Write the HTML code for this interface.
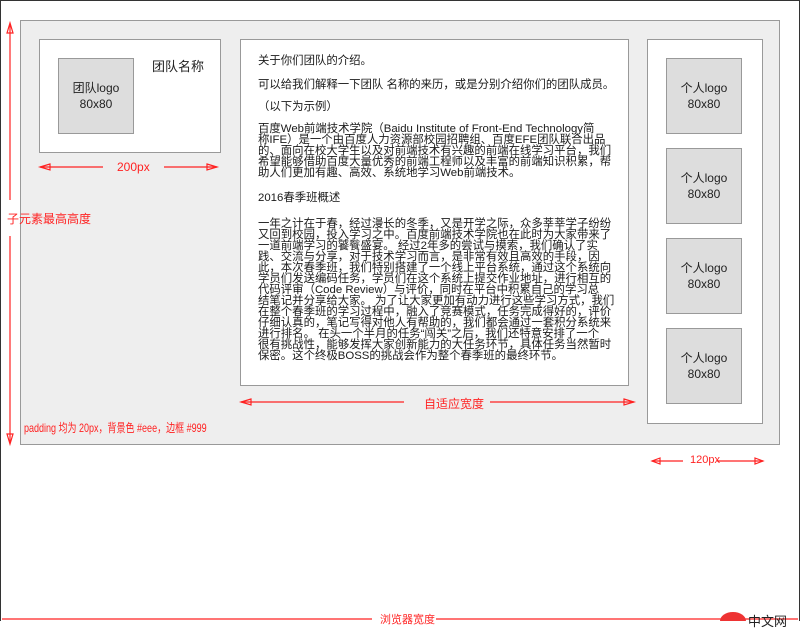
<!DOCTYPE html>
<html><head><meta charset="utf-8"><style>
*{margin:0;padding:0;box-sizing:border-box}
body{width:800px;height:621px;position:relative;background:#fff;overflow:hidden;font-family:"Liberation Sans","Noto Sans CJK SC",sans-serif;color:#222}
.frame{position:absolute;left:0;top:0;width:800px;height:621px;border:1px solid #333;border-bottom:none}
.abs{position:absolute}
.outer{left:20px;top:20px;width:760px;height:425px;background:#eee;border:1px solid #999}
.box{background:#fff;border:1px solid #999}
.logo{background:#ddd;border:1px solid #999;font-size:12px;line-height:16px;text-align:center;display:flex;align-items:center;justify-content:center;color:#222}
.t{font-size:11.4px;line-height:11px;white-space:nowrap;color:#1a1a1a}
.r{color:#f22;font-size:11px;white-space:nowrap}
</style></head><body>
<div class="frame"></div>
<div class="abs outer"></div>
<div class="abs box" style="left:39px;top:39px;width:182px;height:114px"></div>
<div class="abs logo" style="left:58px;top:58px;width:76px;height:76px">团队logo<br>80x80</div>
<div class="abs" style="left:152px;top:56px;font-size:13px;color:#222">团队名称</div>
<div class="abs box" style="left:240px;top:39px;width:389px;height:347px"></div>
<div class="abs t" style="left:258px;top:56px">关于你们团队的介绍。</div>
<div class="abs t" style="left:258px;top:80px">可以给我们解释一下团队 名称的来历，或是分别介绍你们的团队成员。</div>
<div class="abs t" style="left:258px;top:102px">（以下为示例）</div>
<div class="abs t" style="left:258px;top:124px">百度Web前端技术学院（Baidu Institute of Front-End Technology简<br>称IFE）是一个由百度人力资源部校园招聘组、百度EFE团队联合出品<br>的、面向在校大学生以及对前端技术有兴趣的前端在线学习平台，我们<br>希望能够借助百度大量优秀的前端工程师以及丰富的前端知识积累，帮<br>助人们更加有趣、高效、系统地学习Web前端技术。</div>
<div class="abs t" style="left:258px;top:193px">2016春季班概述</div>
<div class="abs t" style="left:258px;top:219px">一年之计在于春，经过漫长的冬季，又是开学之际，众多莘莘学子纷纷<br>又回到校园，投入学习之中。百度前端技术学院也在此时为大家带来了<br>一道前端学习的饕餮盛宴。 经过2年多的尝试与摸索，我们确认了实<br>践、交流与分享，对于技术学习而言，是非常有效且高效的手段，因<br>此，本次春季班，我们特别搭建了一个线上平台系统，通过这个系统向<br>学员们发送编码任务，学员们在这个系统上提交作业地址，进行相互的<br>代码评审（Code Review）与评价，同时在平台中积累自己的学习总<br>结笔记并分享给大家。 为了让大家更加有动力进行这些学习方式，我们<br>在整个春季班的学习过程中，融入了竞赛模式，任务完成得好的，评价<br>仔细认真的，笔记写得对他人有帮助的，我们都会通过一套积分系统来<br>进行排名。 在头一个半月的任务“闯关”之后，我们还特意安排了一个<br>很有挑战性，能够发挥大家创新能力的大任务环节，具体任务当然暂时<br>保密。这个终极BOSS的挑战会作为整个春季班的最终环节。</div>
<div class="abs box" style="left:647px;top:39px;width:116px;height:385px"></div>
<div class="abs logo" style="left:666px;top:58px;width:76px;height:76px">个人logo<br>80x80</div>
<div class="abs logo" style="left:666px;top:148px;width:76px;height:76px">个人logo<br>80x80</div>
<div class="abs logo" style="left:666px;top:238px;width:76px;height:76px">个人logo<br>80x80</div>
<div class="abs logo" style="left:666px;top:328px;width:76px;height:76px">个人logo<br>80x80</div>
<svg class="abs" style="left:0;top:0" width="800" height="621">
<g stroke="#f22" stroke-width="1.2" fill="none">
<line x1="10" y1="24" x2="10" y2="200"/><path d="M7 33 L10 23 L13 33 Z"/>
<line x1="10" y1="236" x2="10" y2="443"/><path d="M7 434 L10 444 L13 434 Z"/>
<line x1="40" y1="167" x2="103" y2="167"/><path d="M50 164 L40 167 L50 170 Z"/>
<line x1="164" y1="167" x2="217" y2="167"/><path d="M207 164 L217 167 L207 170 Z"/>
<line x1="241" y1="402" x2="404" y2="402"/><path d="M251 399 L241 402 L251 405 Z"/>
<line x1="490" y1="402" x2="634" y2="402"/><path d="M624 399 L634 402 L624 405 Z"/>
<line x1="652" y1="461" x2="683" y2="461"/><path d="M660 458 L652 461 L660 464 Z"/>
<line x1="717" y1="461" x2="763" y2="461"/><path d="M755 458 L763 461 L755 464 Z"/>
<line x1="2" y1="619" x2="372" y2="619"/><line x1="436" y1="619" x2="798" y2="619"/>
</g>
<ellipse cx="733" cy="621" rx="13" ry="9" fill="#e33"/>
</svg>
<div class="abs r" style="left:7px;top:210px;font-size:12px">子元素最高高度</div>
<div class="abs r" style="left:117px;top:160px;font-size:12px">200px</div>
<div class="abs r" style="left:424px;top:395px;font-size:12px">自适应宽度</div>
<div class="abs r" style="left:24px;top:419px;font-size:12px;transform:scaleX(0.75);transform-origin:0 0">padding 均为 20px，背景色 #eee，边框 #999</div>
<div class="abs r" style="left:690px;top:454px;font-size:11px">120px</div>
<div class="abs r" style="left:380px;top:611px;font-size:11px">浏览器宽度</div>
<div class="abs" style="left:748px;top:611px;font-size:13px;color:#222">中文网</div>
</body></html>
